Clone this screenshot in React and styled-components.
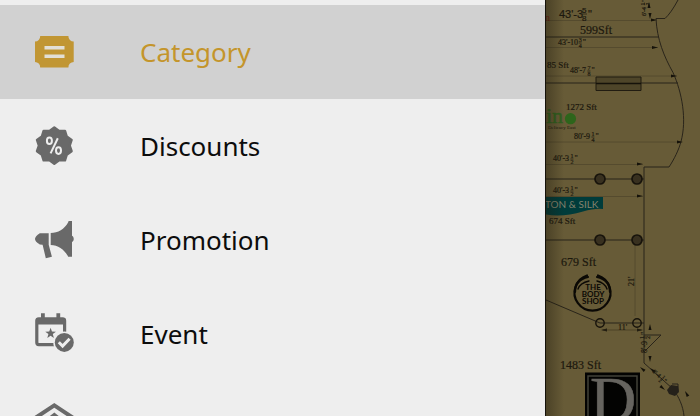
import React, { useState } from "react";
import styled, { createGlobalStyle } from "styled-components";

const GlobalStyle = createGlobalStyle`
  * { box-sizing: border-box; }
  body { margin: 0; background: #675b37; }
`;

const Shell = styled.div`
  display: flex;
  height: 100vh;
  overflow: hidden;
  font-family: "Noto Sans", sans-serif;
`;

const Drawer = styled.nav`
  flex: 0 0 78%;
  padding-top: 5px;
  overflow: hidden;
  background: #eeeeee;
  border-right: 1px solid #15120a;
`;

const MenuItem = styled.button`
  display: flex;
  align-items: center;
  gap: 66px;
  width: 100%;
  height: 94px;
  padding: 0 34px;
  border: 0;
  background: ${({ $active }) => ($active ? "#d1d1d1" : "transparent")};
  color: ${({ $active }) => ($active ? "#c4952b" : "#0c0c0c")};
  font: inherit;
  font-size: 26px;
  line-height: 36px;
  text-align: left;
  cursor: pointer;
`;

const Icon = styled.svg`
  flex: none;
  width: 40px;
  height: 40px;
  overflow: visible;
  color: ${({ $active }) => ($active ? "#c19633" : "#696969")};
`;

const MapPane = styled.main`
  flex: 1;
  min-width: 0;
  background: #675b37;
`;

const Plan = styled.svg`
  display: block;
  width: 100%;
  height: 100%;
  font-family: "Liberation Serif", serif;
`;

const points = (count, outer, inner, cx, cy) =>
  Array.from({ length: count * 2 }, (_, i) => {
    const r = i % 2 ? inner : outer;
    const a = (i * Math.PI) / count;
    return `${cx + r * Math.sin(a)},${cy - r * Math.cos(a)}`;
  }).join(" ");

const icons = {
  category: (
    <>
      <path fill="currentColor" d="M6.2 4h28.2a5.4 5.4 0 0 0 5.3 5.6v20.3a5.4 5.4 0 0 0-5.3 5.6H6.2A5.4 5.4 0 0 0 1 29.9V9.6A5.4 5.4 0 0 0 6.2 4z" />
      <path fill="#e2dfd5" d="M10.5 14h20v3.6h-20zM10.5 22.4h20V26h-20z" />
    </>
  ),
  discounts: (
    <>
      <polygon points={points(10, 18.2, 15.4, 20.3, 19.6)} fill="currentColor" stroke="currentColor" strokeWidth="2.4" strokeLinejoin="round" />
      <g fill="none" stroke="#eee" strokeWidth="2">
        <ellipse cx="15.4" cy="14.8" rx="2.5" ry="3.3" />
        <ellipse cx="24.5" cy="24.6" rx="2.5" ry="3.3" />
        <path d="M23.8 12.2 16.6 27.4" />
      </g>
    </>
  ),
  promotion: (
    <path
      fill="currentColor"
      d="M5.8 13.3h8.9v11.4l3.2 12-6.1 1.5-3.2-13.4-2.8-.3Q1 21.500 1 19t4.8-5.7zM16.7 13C24 13 30.5 9 34.2 2.2L34.6 1H38v14.8c2.3 1.3 2.3 4.9 0 6.2v14.8h-3.8C30.5 29.5 24 25 16.7 25z"
    />
  ),
  event: (
    <>
      <path fill="currentColor" d="M7-.7h3.8V5H7zM22.4-.7h3.8V5h-3.8z" />
      <rect x="2.8" y="4.8" width="27.8" height="25.8" rx="2" fill="none" stroke="currentColor" strokeWidth="3.2" />
      <path fill="currentColor" d="M2 4.5h29.5v6H2z" />
      <polygon points={points(5, 5.6, 2.3, 16.6, 19.4)} fill="currentColor" />
      <circle cx="30.3" cy="28.4" r="11" fill="#eee" />
      <circle cx="30.3" cy="28.4" r="9.5" fill="currentColor" />
      <path d="m24.8 28.2 3.8 3.8 7-7.2" fill="none" stroke="#eee" strokeWidth="3" />
    </>
  ),
  home: (
    <>
      <path d="M2 9.5 20.3-2.6 38.6 9.5V42H2z" fill="none" stroke="currentColor" strokeWidth="4" />
      <path d="m12 11 8.3-6.4 8.3 6.4v16H12z" fill="currentColor" />
    </>
  ),
};

const items = [
  { id: "category", label: "Category" },
  { id: "discounts", label: "Discounts" },
  { id: "promotion", label: "Promotion" },
  { id: "event", label: "Event" },
  { id: "home" },
];

/* A dimension label: feet and inches followed by a stacked fraction. */
function Dimension({ x, y, size, text, top, bottom }) {
  const small = Math.round(size * 0.8);
  const left = x + size * text.length * 0.41 + 1;
  return (
    <g fontSize={size}>
      <text x={x} y={y}>{text}</text>
      <text x={left} y={y - small / 2} fontSize={small}>{top}</text>
      <text x={left} y={y + small / 2} fontSize={small}>{bottom}</text>
      <path d={`M${left} ${y - small / 2 + 1}h${small / 2}`} stroke="#1c180e" strokeWidth="0.7" />
      <text x={left + small / 2 + 1} y={y}>"</text>
    </g>
  );
}

const Arrow = ({ x, y, angle = 0 }) => (
  <path d="M0 0-6-1.5v3z" transform={`translate(${x} ${y}) rotate(${angle})`} fill="#15120a" />
);

function FloorPlan() {
  return (
    <Plan viewBox="0 0 154 416" preserveAspectRatio="xMinYMin slice" role="img" aria-label="Floor plan">
      <defs>
        <linearGradient id="edge">
          <stop offset="0" stopColor="#1d180b" stopOpacity="0.38" />
          <stop offset="1" stopColor="#1d180b" stopOpacity="0" />
        </linearGradient>
      </defs>
      <rect width="154" height="416" fill="#675b37" />
      <g fill="none" stroke="#51472c" strokeWidth="0.8">
        <path d="M0 20.5h109M0 47.5h112M0 76h131M0 142h135M0 164.5h97M0 196.5h97M89 244v72" />
      </g>
      <g fill="none" stroke="#29241a">
        <path d="M0 37h113M0 83h132M0 179h98M0 240h98M0 300l54 23h44" />
        <path d="M132 0q-7 13-13 18.5h-9c1 21 8 38 17 54 9 20 14 47 8 69-2 8-7 18-12 25.5H98V363l29 26c6 8 10 17 11 27" />
        <path d="M98 335h17l-17 17" />
      </g>
      <path d="M50 77h45v13.5H50z" fill="#4e4529" stroke="#211c11" />
      <path d="M50 83.5h45" stroke="#15120a" strokeWidth="1.6" />
      <g fill="#38301f" stroke="#17130b" strokeWidth="1.7">
        <circle cx="54" cy="179" r="5" />
        <circle cx="91" cy="179" r="5" />
        <circle cx="54" cy="240" r="5" />
        <circle cx="91" cy="240" r="5" />
      </g>
      <g fill="none" stroke="#17130b" strokeWidth="1.4">
        <circle cx="54" cy="323" r="4.2" />
        <circle cx="91" cy="323" r="4.2" />
      </g>
      <path d="m121 390 4-5 7 1 1 6-4 4-6-2z" fill="#25211a" />
      <path d="M126 384h6v7" fill="none" stroke="#25211a" />
      <Arrow x="111" y="20" />
      <Arrow x="112" y="47.5" />
      <Arrow x="131" y="76" />
      <Arrow x="137" y="142" />
      <Arrow x="97" y="164" />
      <Arrow x="97" y="196" />
      <Arrow x="55" y="330" angle={180} />
      <Arrow x="97" y="330" />
      <Arrow x="104" y="324" angle={-90} />
      <Arrow x="104" y="362" angle={90} />
      <Arrow x="94" y="367" angle={-140} />
      <Arrow x="104" y="368" angle={-140} />
      <Arrow x="119" y="390" angle={40} />
      <Arrow x="139" y="391" angle={-120} />
      <Arrow x="103" y="2" angle={-90} />
      <Arrow x="104" y="19" angle={90} />
      <path d="M58 330h36" stroke="#40371f" strokeWidth="0.7" />

      <g fill="#1c180e" stroke="#1c180e" strokeWidth="0.2">
        <g fontFamily="Liberation Sans, sans-serif" fontSize="11">
          <text x="13" y="18">43'-3</text>
          <text x="36" y="13" fontSize="8">5</text>
          <text x="36" y="21" fontSize="8">8</text>
          <path d="M36 14h5" strokeWidth="0.7" />
          <text x="42" y="18">"</text>
        </g>
        <text x="34" y="34" fontSize="12">599Sft</text>
        <Dimension x={12} y={45} size={8} text="43'-10" top="3" bottom="4" />
        <text x="1" y="68" fontSize="9">85 Sft</text>
        <Dimension x={24} y={73} size={8} text="48'-7" top="7" bottom="8" />
        <text x="20" y="110" fontSize="9">1272 Sft</text>
        <Dimension x={28} y={139} size={8} text="80'-9" top="1" bottom="4" />
        <Dimension x={7} y={161} size={8} text="40'-3" top="1" bottom="2" />
        <Dimension x={7} y={193} size={8} text="40'-3" top="1" bottom="2" />
        <text x="3" y="224" fontSize="9">674 Sft</text>
        <text x="15" y="266" fontSize="12">679 Sft</text>
        <text x="14" y="369" fontSize="12">1483 Sft</text>
        <text x="72" y="330" fontSize="8">11'</text>
        <text transform="translate(88 286) rotate(-90)" fontSize="8">21'</text>
        <g transform="translate(100 16) rotate(-90)">
          <Dimension x={0} y={0} size={6} text="6'-4" top="1" bottom="2" />
        </g>
        <g transform="translate(101 353) rotate(-90)">
          <Dimension x={0} y={0} size={8} text="8'-9" top="1" bottom="2" />
        </g>
        <g transform="translate(106 372) rotate(42)">
          <Dimension x={0} y={0} size={6} text="8'-4" top="1" bottom="2" />
        </g>
      </g>
      <text x="-1" y="21" fill="#701c13" fontSize="10">n</text>

      <text x="0" y="123" fill="#316120" stroke="#316120" strokeWidth="0.5" fontSize="22">in</text>
      <circle cx="24.5" cy="118.7" r="5.6" fill="#2d651b" />
      <text x="2" y="129" fill="#1c180e" fontSize="5">Delicacy East</text>

      <path d="M0 197h57v12q-8-1-20 2.5-20 6-37 3z" fill="#003c3b" />
      <text x="-1" y="208" fill="#85826e" fontFamily="Lato, sans-serif" fontSize="10">TON &amp; SILK</text>

      <g fill="none" stroke="#0b0905" strokeLinecap="round">
        <path d="M41 275.5a18 18 0 1 0 11 0" strokeWidth="2.2" />
        <path d="M42 277q-13 3-13 15M51 277q13 3 13 15" strokeWidth="2.2" />
        <path d="M43 281q-9 2-11 8M51 281q8 2 10 8" strokeWidth="1.4" />
      </g>
      <g fill="#0b0905" fontFamily="Lato, sans-serif" fontSize="8" fontWeight="700" textAnchor="middle">
        <text x="47" y="290">THE</text>
        <text x="47" y="297">BODY</text>
        <text x="47" y="304">SHOP</text>
      </g>

      <path d="M39 372.5h55V416H39z" fill="#030302" />
      <path d="M42 416v-40h49v40" fill="none" stroke="#424139" strokeWidth="1.5" />
      <text x="44" y="421" fill="#66645f" stroke="#66645f" strokeWidth="0.6" fontSize="64">D</text>
      <rect width="18" height="416" fill="url(#edge)" />
    </Plan>
  );
}

export default function App() {
  const [selected, setSelected] = useState("category");
  return (
    <>
      <GlobalStyle />
      <Shell>
        <Drawer aria-label="Main">
          {items.map(({ id, label }) => (
            <MenuItem
              key={id}
              type="button"
              $active={id === selected}
              aria-current={id === selected ? "page" : undefined}
              aria-label={label ?? "Home"}
              onClick={() => setSelected(id)}
            >
              <Icon viewBox="0 0 40 40" $active={id === selected} aria-hidden="true">{icons[id]}</Icon>
              {label}
            </MenuItem>
          ))}
        </Drawer>
        <MapPane>
          <FloorPlan />
        </MapPane>
      </Shell>
    </>
  );
}
